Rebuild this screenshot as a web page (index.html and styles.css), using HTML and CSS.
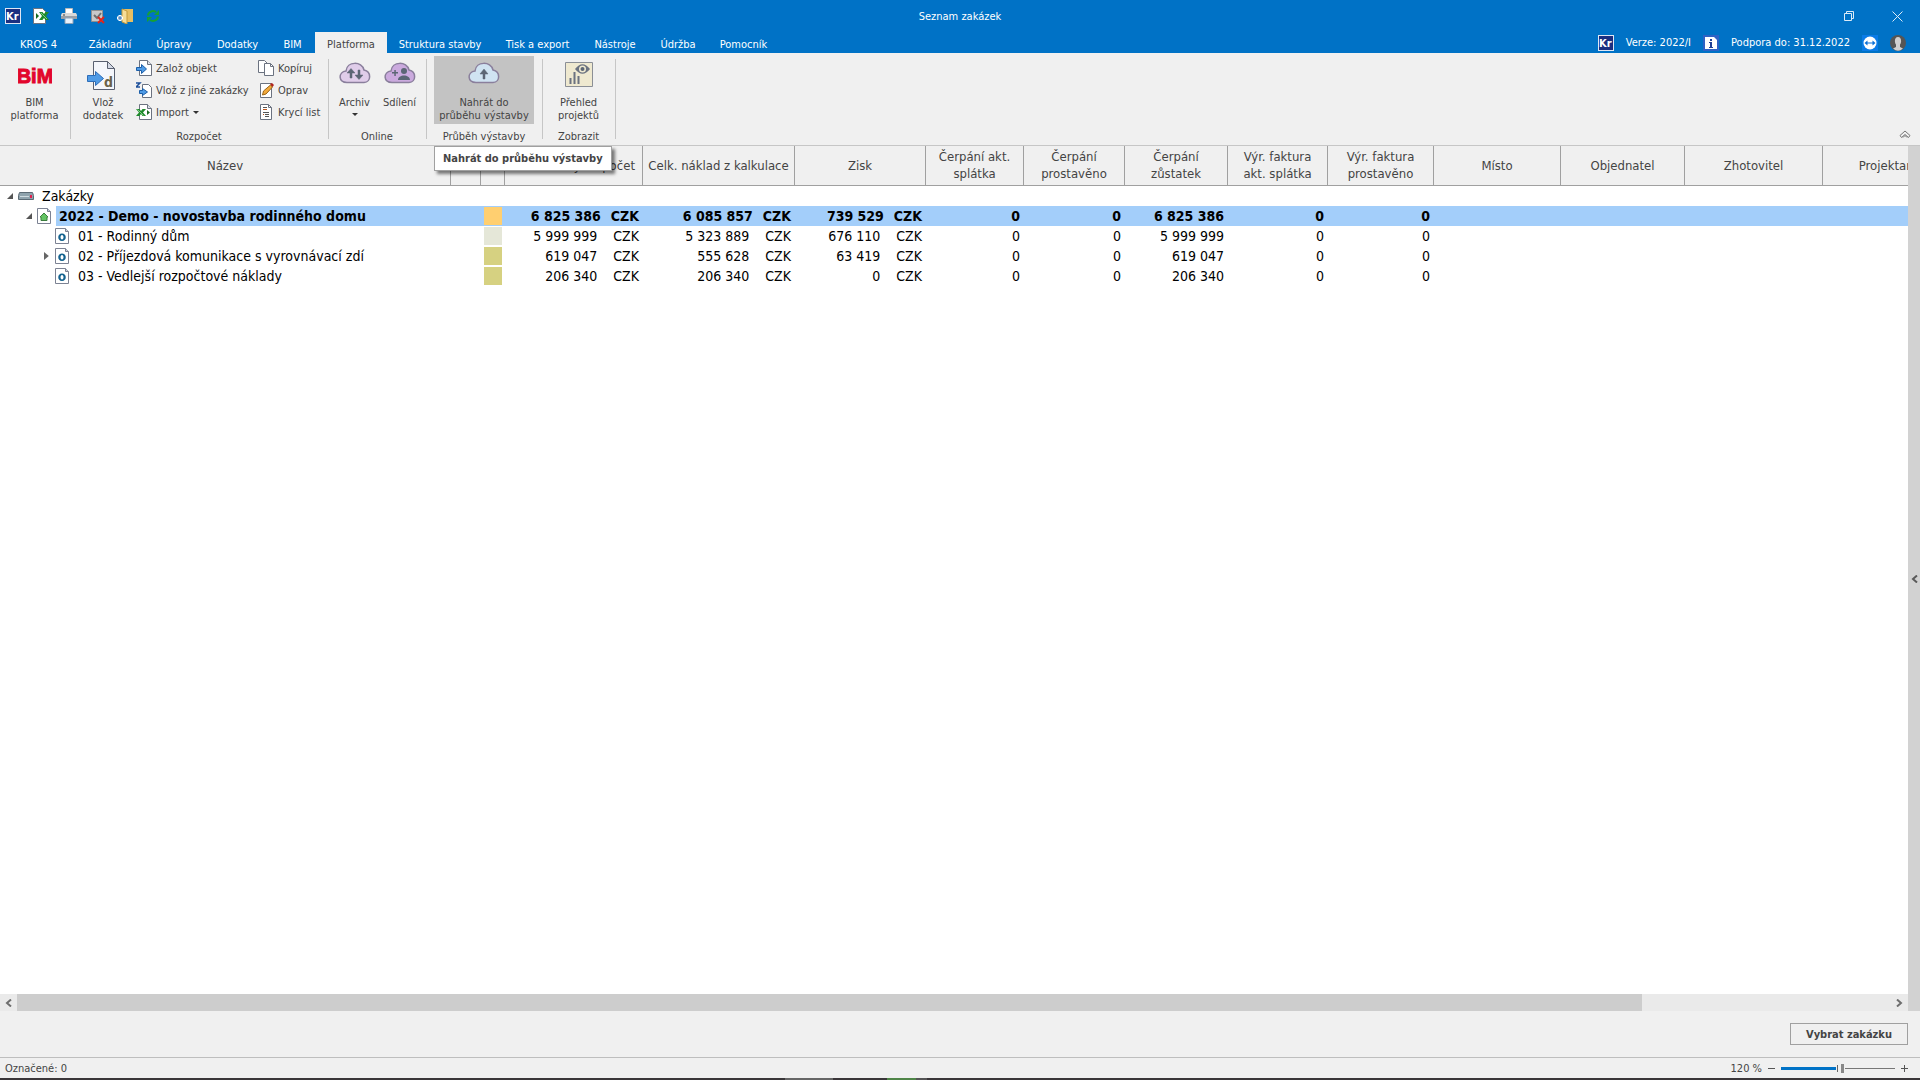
FILE: index.html
```
<!DOCTYPE html>
<html lang="cs">
<head>
    <meta charset="UTF-8">
    <meta name="viewport" content="width=device-width, initial-scale=1.0">
    <title>Seznam zakázek</title>
    <link rel="stylesheet" href="styles.css">
</head>
<body>
    <!-- shared icons -->
    <svg class="defs" aria-hidden="true">
        <symbol id="i-kr" viewBox="0 0 16 16">
            <rect x=".5" y=".5" width="15" height="15" fill="#1b2f80" stroke="#dfe6f4"/>
            <text x="1" y="12" fill="#fff" font-size="11" font-weight="bold">Kr</text>
        </symbol>
        <symbol id="i-page" viewBox="0 0 16 16">
            <path d="M3.5.5h8l4 4v11h-12z" fill="#fff" stroke="#6b7280"/>
            <path d="M11.500.5v4h4" fill="#dde1ea" stroke="#6b7280"/>
        </symbol>
        <symbol id="i-excel" viewBox="0 0 16 16">
            <path d="M3.500.5h8l4 4v11h-12z" fill="#fff" stroke="#6b7280"/>
            <path d="M11.500.5v4h4" fill="#dde1ea" stroke="#6b7280"/>
            <path d="M0 5h3.500l1.500 2L6.500 5H10L7 8.500l3 3.500H6.500L5 10l-1.500 2H0l3-3.500z" fill="#1f8a2c"/>
            <path d="M1.500 5.500l6 6" stroke="#7fd085"/>
            <path d="M11 6v5l3-2.500z" fill="#156b1f"/>
        </symbol>
        <symbol id="i-arrow" viewBox="0 0 16 16">
            <path d="M.5 7.500h5v-3l5 4.500-5 4.500v-3h-5z" fill="#4f9be6" stroke="#1d5fa8"/>
        </symbol>
        <symbol id="i-object" viewBox="0 0 14 16">
            <path d="M.5.5h10l3 3v12H.5z" fill="#fff" stroke="#7c8293"/>
            <path d="M10.500.5v3h3" fill="#c9cedb" stroke="#7c8293"/>
            <path fill-rule="evenodd" d="M7 5.500c5 0 5 7.500 0 7.500s-5-7.500 0-7.500zm0 1.500c-2 0-2 4.500 0 4.500s2-4.500 0-4.500z" fill="#14628f"/>
        </symbol>
        <symbol id="i-cloud" viewBox="0 0 32 22">
            <path d="M8 20.500c-9 0-9-10.500-1-11.500C8-1 23-1 25 8c7.500 1.500 7.500 12 0 12.500z" stroke="#8a7f9c" stroke-width="1.500"/>
        </symbol>
    </svg>

    <header class="titlebar">
        <div class="quick">
            <button aria-label="KROS"><svg width="16" height="16"><use href="#i-kr"/></svg></button>
            <button aria-label="Export do Excelu"><svg width="16" height="16" viewBox="0 0 16 16">
                <path d="M.5.5h9l3 3v12H.5z" fill="#fff" stroke="#6b7280"/>
                <path d="M3 5v6l3-3z" fill="#156b1f"/>
                <path d="M6 4h3.500L11 6l1.500-2H16l-3 4 3 4h-3.500L11 10l-1.500 2H6l3-4z" fill="#1f8a2c"/>
                <path d="M8 5l6 6" stroke="#7fd085"/>
            </svg></button>
            <button aria-label="Tisk"><svg width="16" height="16" viewBox="0 0 16 16">
                <path d="M4.500.5h7v6h-7z" fill="#fff" stroke="#b9b9b9"/>
                <path d="M1 5h14l1 2v4H0V7z" fill="#d9d9d9"/>
                <path d="M0 8h16v3H0z" fill="#9ba0a6"/>
                <path d="M4 10h8v5.500H4z" fill="#eaf2fb" stroke="#8fa3b8"/>
                <path d="M2 7h2" stroke="#3b3b3b"/>
            </svg></button>
            <button aria-label="Zrušit označení"><svg width="16" height="16" viewBox="0 0 16 16">
                <path d="M2.500 2.500h11v11h-11z" fill="#c9c9c9" stroke="#8f8f8f"/>
                <path d="M5 7l3 3 4-5" fill="none" stroke="#6f6f6f" stroke-width="2"/>
                <path d="M9 9l6 6m0-6l-6 6" stroke="#e0241a" stroke-width="2"/>
            </svg></button>
            <button aria-label="Nová složka"><svg width="16" height="16" viewBox="0 0 16 16">
                <path d="M5 1h11v13H8z" fill="#e7bf63"/>
                <path d="M5 1l5 2v13l-5-2z" fill="#f7dd97" stroke="#c39a3c"/>
                <path d="M0 10h6M3 7v6" stroke="#fff" stroke-width="3"/>
                <path d="M1 10h4M3 8v4" stroke="#2568b0"/>
            </svg></button>
            <button aria-label="Obnovit"><svg width="16" height="16" viewBox="0 0 16 16">
                <path d="M3 7.500A5 4.500 0 0 1 11 4M13 8.500A5 4.500 0 0 1 5 12" fill="none" stroke="#16a034" stroke-width="2"/>
                <path d="M14 2v5H9zM2 14V9h5z" fill="#16a034"/>
            </svg></button>
        </div>
        <div class="title">Seznam zakázek</div>
        <div class="window-buttons">
            <button aria-label="Obnovit okno"><svg width="10" height="10" viewBox="0 0 10 10" fill="none" stroke="#dcebf7"><path d="M.5 2.500h7v7h-7zM2.500 2V.5h7v7H8"/></svg></button>
            <button aria-label="Zavřít"><svg width="11" height="11" viewBox="0 0 11 11" fill="none" stroke="#dcebf7"><path d="M.5.5l10 10M10.500.5l-10 10"/></svg></button>
        </div>
    </header>

    <nav class="tabbar">
        <div class="tabs">
            <button>KROS 4</button>
            <button>Základní</button>
            <button>Úpravy</button>
            <button>Dodatky</button>
            <button>BIM</button>
            <button class="active">Platforma</button>
            <button>Struktura stavby</button>
            <button>Tisk a export</button>
            <button>Nástroje</button>
            <button>Údržba</button>
            <button>Pomocník</button>
        </div>
        <div class="info">
            <svg width="16" height="16"><use href="#i-kr"/></svg>
            <span>Verze: 2022/I</span>
            <svg width="16" height="16" viewBox="0 0 16 16">
                <path d="M0 0h16v16H0z" fill="#2e62c4"/>
                <path d="M2 2h9l3 3v9H2z" fill="#fff"/>
                <path d="M7 4h2v2H7zM6 7h3v5h1v1H6v-1h1V8H6z" fill="#1f3f96"/>
            </svg>
            <span>Podpora do: 31.12.2022</span>
            <svg width="16" height="16" viewBox="0 0 16 16">
                <path d="M0 0h16v16H0z" fill="#0a7be6"/>
                <circle cx="8" cy="8" r="6.500" fill="#fff"/>
                <path d="M2.500 8l3-2.500v2h5v-2l3 2.500-3 2.500v-2h-5v2z" fill="#0a6fd6"/>
            </svg>
            <svg width="16" height="16" viewBox="0 0 16 16">
                <circle cx="8" cy="8" r="8" fill="#555"/>
                <path d="M8 2c4 0 3.500 6 2 7.500V12l3 1.500Q8 18 3 13.500L6 12V9.500C4.500 8 4 2 8 2z" fill="#d0d0d0"/>
            </svg>
        </div>
    </nav>

    <section class="ribbon">
        <div class="group g-bim">
            <button class="big">
                <svg width="34" height="32" viewBox="0 0 34 32"><text class="bim" x="17" y="23" text-anchor="middle">BiM</text></svg>
                BIM<br>platforma
            </button>
        </div>
        <span class="sep"></span>
        <div class="group g-budget">
            <div class="items">
                <button class="big">
                    <svg width="32" height="32" viewBox="0 0 32 32">
                        <path d="M6.500 1.500h14l7 7v21h-21z" fill="#f4f6fb" stroke="#596070"/>
                        <path d="M20.500 1.500v7h7z" fill="#d5dae6" stroke="#596070"/>
                        <path d="M.5 15.500h8v-4l8 7-8 7v-4h-8z" fill="#4f9be6" stroke="#2d6db8"/>
                        <text x="17" y="27" fill="#6b6248" font-size="14" font-weight="bold">d</text>
                    </svg>
                    Vlož<br>dodatek
                </button>
                <div class="small-col">
                    <button class="small"><svg width="16" height="16"><use href="#i-page"/><use href="#i-arrow"/></svg>Založ objekt</button>
                    <button class="small"><svg width="16" height="16" viewBox="0 0 16 16">
                        <path d="M6.500 2.500h6l3 3v10h-9z" fill="#fff" stroke="#6b7280"/>
                        <path d="M0 1h4L0 5h4" fill="none" stroke="#1d4f9a" stroke-width="1.500"/>
                        <path d="M3.500 8.500h3v-2l5 3.500-5 3.500v-2h-3z" fill="#4f9be6" stroke="#1d5fa8"/>
                    </svg>Vlož z jiné zakázky</button>
                    <button class="small"><svg width="16" height="16"><use href="#i-excel"/></svg>Import<i class="caret"></i></button>
                </div>
                <div class="small-col">
                    <button class="small"><svg width="16" height="16" viewBox="0 0 16 16" fill="#fff" stroke="#6b7280">
                        <path d="M.5.5h6l3 3v9h-9z"/>
                        <path d="M6.500 3.500h6l3 3v9h-9z"/>
                        <path d="M12.500 3.500v3h3" fill="none"/>
                    </svg>Kopíruj</button>
                    <button class="small"><svg width="16" height="16" viewBox="0 0 16 16">
                        <path d="M2.500 1.500h11v14h-11z" fill="#fff" stroke="#6b7280"/>
                        <path d="M4.500 13l1-4 7-6 2 2-6.500 7z" fill="#f2a93b" stroke="#9a6416"/>
                        <path d="M12 2l2-1 2 2-1.500 2z" fill="#b2241c"/>
                    </svg>Oprav</button>
                    <button class="small"><svg width="16" height="16" viewBox="0 0 16 16">
                        <path d="M2.500.5h8l3 3v12h-11z" fill="#fff" stroke="#6b7280"/>
                        <path d="M10.500.5v3h3" fill="none" stroke="#6b7280"/>
                        <path d="M5 3.500h4M5 8.500h6M7 10.500h4M7 12.500h4" stroke="#555"/>
                        <path d="M5 5.500h4M5 10.500h1" stroke="#c0561c"/>
                    </svg>Krycí list</button>
                </div>
            </div>
            <div class="caption">Rozpočet</div>
        </div>
        <span class="sep"></span>
        <div class="group g-online">
            <div class="items">
                <button class="big">
                    <svg width="32" height="32" viewBox="0 0 32 32">
                        <use href="#i-cloud" y="2" width="32" height="22" fill="#e0cdea"/>
                        <path d="M11 18v-5H8l4-4.500 4 4.500h-3v5zM19 10h2v5h3l-4 4.500-4-4.500h3z" fill="#5c6675" stroke="#5c6675" stroke-width=".5"/>
                    </svg>
                    Archiv<i class="caret"></i>
                </button>
                <button class="big">
                    <svg width="32" height="32" viewBox="0 0 32 32">
                        <use href="#i-cloud" y="2" width="32" height="22" fill="#cbaade"/>
                        <circle cx="20" cy="11" r="3" fill="#5c6675"/>
                        <path d="M14 20c0-6 12-6 12 0zM8 12h6v1.500H8zM10.300 10h1.500v6h-1.500z" fill="#5c6675"/>
                    </svg>
                    Sdílení
                </button>
            </div>
            <div class="caption">Online</div>
        </div>
        <span class="sep"></span>
        <div class="group g-progress">
            <button class="big hover" aria-describedby="tip">
                <svg width="32" height="32" viewBox="0 0 32 32">
                    <use href="#i-cloud" y="2" width="32" height="22" fill="#d0e3f2"/>
                    <path d="M15 19v-5h-3l4-5 4 5h-3v5z" fill="#5c6675" stroke="#5c6675" stroke-width=".5"/>
                </svg>
                Nahrát do<br>průběhu výstavby
            </button>
            <div class="caption">Průběh výstavby</div>
            <div class="tooltip" id="tip" role="tooltip">Nahrát do průběhu výstavby</div>
        </div>
        <span class="sep"></span>
        <div class="group g-view">
            <button class="big">
                <svg width="32" height="32" viewBox="0 0 32 32">
                    <path d="M2.500 2.500h27v24h-27z" fill="#efe9d0" stroke="#8b8f96"/>
                    <path d="M12 9Q19.500-.5 27 9 19.500 18.500 12 9z" fill="#6b7280"/>
                    <circle cx="19.500" cy="9" r="3.500" fill="#efe9d0"/>
                    <circle cx="19.500" cy="9" r="2" fill="#5c6675"/>
                    <path d="M7.500 24v-6M11.500 24V12M15.500 24v-8" stroke="#6b7280" stroke-width="2"/>
                </svg>
                Přehled<br>projektů
            </button>
            <div class="caption">Zobrazit</div>
        </div>
        <span class="sep"></span>
        <button class="collapse" aria-label="Sbalit pás karet"><svg width="12" height="9" viewBox="0 0 12 9" fill="none" stroke="#777"><path d="M1 5.500L6 1l5 4.500-1.500 2L6 4.500l-3.500 3zM4 7.500l2-2 2 2"/></svg></button>
    </section>

    <main class="workspace">
        <div class="list">
            <div class="grid">
                <table>
                    <colgroup>
                        <col class="w-name"><col class="w-flag"><col class="w-color"><col class="w-budget"><col class="w-cost"><col class="w-profit">
                        <col class="w-98"><col class="w-101"><col class="w-103"><col class="w-100"><col class="w-106">
                        <col class="w-place"><col class="w-client"><col class="w-supplier"><col class="w-designer">
                    </colgroup>
                    <thead>
                        <tr>
                            <th>Název</th>
                            <th></th>
                            <th></th>
                            <th class="right">Celkový rozpočet</th>
                            <th>Celk. náklad z kalkulace</th>
                            <th>Zisk</th>
                            <th>Čerpání akt.<br>splátka</th>
                            <th>Čerpání<br>prostavěno</th>
                            <th>Čerpání<br>zůstatek</th>
                            <th>Výr. faktura<br>akt. splátka</th>
                            <th>Výr. faktura<br>prostavěno</th>
                            <th>Místo</th>
                            <th>Objednatel</th>
                            <th>Zhotovitel</th>
                            <th>Projektant</th>
                        </tr>
                    </thead>
                    <tbody>
                        <tr>
                            <td colspan="15"><div class="node root"><i class="open"></i>
                                <svg width="16" height="8" viewBox="0 0 16 8"><path d="M1.500.5h13l1 3v4H.5v-4z" fill="#8fa3ad" stroke="#5c6b75"/><path d="M2 4.500h9" stroke="#cfdbe0"/><path d="M12 3h2v3h-2z" fill="#e0214e"/></svg>
                                <span>Zakázky</span></div></td>
                        </tr>
                        <tr class="selected">
                            <td><div class="node level1"><i class="open"></i>
                                <svg width="14" height="16" viewBox="0 0 14 16"><path d="M.5.5h10l3 3v12H.5z" fill="#fff" stroke="#7c8293"/><path d="M10.500.5v3h3" fill="#c9cedb" stroke="#7c8293"/><path d="M7 5l4 4h-1v3.500H4V9H3z" fill="#63c463" stroke="#3a7d3d"/></svg>
                                <span>2022 - Demo - novostavba rodinného domu</span></div></td>
                            <td></td>
                            <td><b class="swatch orange"></b></td>
                            <td>6 825 386<span class="cur">CZK</span></td>
                            <td>6 085 857<span class="cur">CZK</span></td>
                            <td>739 529<span class="cur">CZK</span></td>
                            <td>0</td><td>0</td><td>6 825 386</td><td>0</td><td>0</td>
                            <td></td><td></td><td></td><td></td>
                        </tr>
                        <tr>
                            <td><div class="node level2"><i></i><svg width="14" height="16"><use href="#i-object"/></svg><span>01 - Rodinný dům</span></div></td>
                            <td></td>
                            <td><b class="swatch pale"></b></td>
                            <td>5 999 999<span class="cur">CZK</span></td>
                            <td>5 323 889<span class="cur">CZK</span></td>
                            <td>676 110<span class="cur">CZK</span></td>
                            <td>0</td><td>0</td><td>5 999 999</td><td>0</td><td>0</td>
                            <td></td><td></td><td></td><td></td>
                        </tr>
                        <tr>
                            <td><div class="node level2"><i class="closed"></i><svg width="14" height="16"><use href="#i-object"/></svg><span>02 - Příjezdová komunikace s vyrovnávací zdí</span></div></td>
                            <td></td>
                            <td><b class="swatch olive"></b></td>
                            <td>619 047<span class="cur">CZK</span></td>
                            <td>555 628<span class="cur">CZK</span></td>
                            <td>63 419<span class="cur">CZK</span></td>
                            <td>0</td><td>0</td><td>619 047</td><td>0</td><td>0</td>
                            <td></td><td></td><td></td><td></td>
                        </tr>
                        <tr>
                            <td><div class="node level2"><i></i><svg width="14" height="16"><use href="#i-object"/></svg><span>03 - Vedlejší rozpočtové náklady</span></div></td>
                            <td></td>
                            <td><b class="swatch olive"></b></td>
                            <td>206 340<span class="cur">CZK</span></td>
                            <td>206 340<span class="cur">CZK</span></td>
                            <td>0<span class="cur">CZK</span></td>
                            <td>0</td><td>0</td><td>206 340</td><td>0</td><td>0</td>
                            <td></td><td></td><td></td><td></td>
                        </tr>
                    </tbody>
                </table>
            </div>
            <div class="hscroll">
                <button aria-label="Doleva"><svg width="7" height="8" viewBox="0 0 7 8" fill="none" stroke="#6e6e6e" stroke-width="2"><path d="M6 .5L2 4l4 3.500"/></svg></button>
                <div class="track"><div class="thumb"></div></div>
                <button aria-label="Doprava"><svg width="7" height="8" viewBox="0 0 7 8" fill="none" stroke="#6e6e6e" stroke-width="2"><path d="M1 .5L5 4 1 7.500"/></svg></button>
            </div>
        </div>
        <button class="side" aria-label="Zobrazit panel"><svg width="7" height="8" viewBox="0 0 7 8" fill="none" stroke="#5a5a5a" stroke-width="2"><path d="M6 .5L2 4l4 3.500"/></svg></button>
    </main>

    <div class="actions">
        <button class="select-btn">Vybrat zakázku</button>
    </div>

    <footer class="status">
        <span>Označené: 0</span>
        <div class="zoom">
            <label for="zoom">120 %</label>
            <button aria-label="Zmenšit"><svg width="7" height="7" viewBox="0 0 7 7" stroke="#555"><path d="M0 3.500h7"/></svg></button>
            <input type="range" id="zoom" min="0" max="100" value="54">
            <button aria-label="Zvětšit"><svg width="7" height="7" viewBox="0 0 7 7" stroke="#555"><path d="M0 3.500h7M3.500 0v7"/></svg></button>
        </div>
    </footer>
    <div class="taskbar"></div>
</body>
</html>
```
FILE: styles.css
```
* {
    box-sizing: border-box;
}
body {
    margin: 0;
    height: 100vh;
    display: flex;
    flex-direction: column;
    overflow: hidden;
    background-color: #f0f0f0;
    color: #444;
    font-family: "DejaVu Sans Condensed", "DejaVu Sans", sans-serif;
    font-size: 11px;
    line-height: 13px;
}
button {
    border: none;
    padding: 0;
    background: none;
    color: inherit;
    font: inherit;
    line-height: 13px;
}
svg {
    display: block;
    flex: none;
}
.defs {
    position: absolute;
    width: 0;
    height: 0;
}

/* title bar */
.titlebar {
    display: grid;
    grid-template-columns: 1fr auto 1fr;
    align-items: center;
    height: 32px;
    background-color: #0072c6;
    color: white;
}
.quick {
    display: flex;
    gap: 12px;
    padding-left: 5px;
}
.window-buttons {
    display: flex;
    justify-content: flex-end;
    gap: 38px;
    padding-right: 17px;
}

/* tabs */
.tabbar {
    display: flex;
    justify-content: space-between;
    height: 21px;
    background-color: #0072c6;
    color: white;
}
.tabs {
    display: grid;
    grid-template-columns: 77px 66px 62px 65px 45px 72px 106px 89px 66px 60px 71px;
}
.tabs button {
    padding-top: 3px;
    white-space: nowrap;
}
.tabs .active {
    background-color: #f0f0f0;
    color: #444;
}
.info {
    display: flex;
    align-items: center;
    gap: 12px;
    padding-right: 14px;
}

/* ribbon */
.ribbon {
    display: flex;
    height: 93px;
    border-bottom: 1px solid #c6c6c6;
}
.group {
    position: relative;
    display: flex;
    flex-direction: column;
    align-items: center;
    padding: 3px 1px 0 0;
}
.g-bim {
    width: 70px;
}
.g-budget {
    width: 257px;
}
.g-online {
    width: 97px;
}
.g-progress {
    width: 115px;
}
.g-view {
    width: 72px;
}
.items {
    display: flex;
    height: 68px;
}
.g-budget .items {
    align-self: flex-start;
    padding-left: 7px;
}
.sep {
    width: 1px;
    height: 80px;
    margin-top: 6px;
    background-color: #c6c6c6;
}
.big {
    display: flex;
    flex-direction: column;
    align-items: center;
    height: 68px;
    min-width: 45px;
    padding-top: 4px;
    white-space: nowrap;
}
.big svg {
    margin-bottom: 4px;
}
.g-budget .big {
    width: 50px;
    margin-right: 8px;
}
.big.hover {
    width: 100px;
    background-color: #c3c3c3;
}
.small-col {
    display: flex;
    flex-direction: column;
    width: 122px;
    padding-top: 1px;
}
.small {
    display: flex;
    align-items: center;
    gap: 4px;
    height: 22px;
    white-space: nowrap;
}
.caret {
    border: 3px solid transparent;
    border-top-color: #333;
    border-bottom: none;
}
.big .caret {
    margin-top: 4px;
}
.caption {
    margin-top: 6px;
}
.bim {
    fill: #e2062c;
    stroke: #e2062c;
    font-size: 20px;
    font-weight: bold;
    font-family: "Liberation Sans", sans-serif;
}
.tooltip {
    position: absolute;
    left: 7px;
    top: 93px;
    z-index: 1;
    padding: 5px 8px;
    border: 1px solid #a0a0a0;
    background-color: white;
    box-shadow: 3px 3px 3px rgba(0, 0, 0, 0.5);
    font-weight: bold;
    white-space: nowrap;
}
.collapse {
    align-self: flex-end;
    margin: 0 9px 6px auto;
}

/* list of orders */
.workspace {
    display: flex;
    flex: 1;
    min-height: 0;
}
.list {
    display: flex;
    flex-direction: column;
    flex: 1;
    min-width: 0;
    background-color: white;
}
.grid {
    flex: 1;
    overflow: hidden;
}
table {
    width: 1955px;
    table-layout: fixed;
    border-collapse: separate;
    border-spacing: 0;
    color: black;
    font-size: 14px;
}
.w-name { width: 451px; }
.w-flag { width: 30px; }
.w-color { width: 24px; }
.w-budget { width: 138px; }
.w-cost { width: 152px; }
.w-profit { width: 131px; }
.w-98 { width: 98px; }
.w-101 { width: 101px; }
.w-103 { width: 103px; }
.w-100 { width: 100px; }
.w-106 { width: 106px; }
.w-place { width: 127px; }
.w-client { width: 124px; }
.w-supplier { width: 138px; }
.w-designer { width: 132px; }
th {
    height: 40px;
    padding: 0 0 1px;
    border-right: 1px solid #a0a0a0;
    border-bottom: 1px solid #a0a0a0;
    background-color: #f0f0f0;
    color: #444;
    font-size: 13px;
    font-weight: normal;
    line-height: 17px;
    white-space: nowrap;
}
th.right {
    padding-right: 7px;
    text-align: right;
}
td {
    height: 20px;
    padding: 0 4px 0 0;
    line-height: 20px;
    text-align: right;
    white-space: nowrap;
}
td:first-child {
    padding: 0;
}
.cur {
    margin-left: 16px;
}
.selected {
    font-weight: bold;
}
.selected td:not(:first-child),
.selected .node span {
    background-color: #a3cefa;
}
.selected .cur {
    margin-left: 10px;
}
.node {
    display: flex;
    align-items: center;
    text-align: left;
}
.node span {
    flex: 1;
    margin-left: 5px;
    padding-left: 3px;
}
.node i {
    width: 6px;
    height: 6px;
    margin-right: 5px;
}
.node .open {
    background-color: #555;
    clip-path: polygon(100% 0, 100% 100%, 0 100%);
}
.node .closed {
    height: 8px;
    background-color: #666;
    clip-path: polygon(0 0, 80% 50%, 0 100%);
}
.root {
    padding-left: 7px;
}
.level1 {
    padding-left: 26px;
}
.level2 {
    padding-left: 44px;
}
.level2 span {
    padding-left: 4px;
}
.swatch {
    display: block;
    width: 18px;
    height: 18px;
    margin-left: 3px;
}
.orange {
    background-color: #ffcf70;
}
.pale {
    background-color: #e5e7d8;
}
.olive {
    background-color: #d6d181;
}
.hscroll {
    display: flex;
    height: 17px;
    background-color: #eaeaea;
}
.hscroll button {
    display: flex;
    align-items: center;
    justify-content: center;
    width: 17px;
}
.track {
    flex: 1;
}
.thumb {
    width: 86.7%;
    height: 100%;
    background-color: #cdcdcd;
}
.side {
    display: flex;
    align-items: center;
    justify-content: center;
    width: 12px;
    background-color: #d2d2d2;
}

/* bottom bars */
.actions {
    display: flex;
    justify-content: flex-end;
    padding: 12px 12px 12px 0;
}
.select-btn {
    width: 118px;
    height: 22px;
    border: 1px solid #a0a0a0;
    font-weight: bold;
}
.status {
    display: flex;
    align-items: center;
    justify-content: space-between;
    height: 21px;
    padding: 0 12px 0 5px;
    border-top: 1px solid #bebebe;
}
.zoom {
    display: flex;
    align-items: center;
    gap: 6px;
}
.zoom input {
    -webkit-appearance: none;
    appearance: none;
    width: 114px;
    height: 9px;
    margin: 0;
    background:
        linear-gradient(#666, #666) 56px 1px / 1px 7px no-repeat,
        linear-gradient(#0072c6, #0072c6) 0 3px / 55px 3px no-repeat,
        linear-gradient(#777, #777) 64px 4px / 50px 1px no-repeat;
}
.zoom input::-webkit-slider-thumb {
    -webkit-appearance: none;
    width: 3px;
    height: 9px;
    background-color: #888;
}
.taskbar {
    height: 2px;
    background: linear-gradient(to right, #3a3639 785px, #666 785px 833px, #3a3639 833px 887px, #4f8548 887px 916px, #555 916px 927px, #3a3639 927px);
}
```
